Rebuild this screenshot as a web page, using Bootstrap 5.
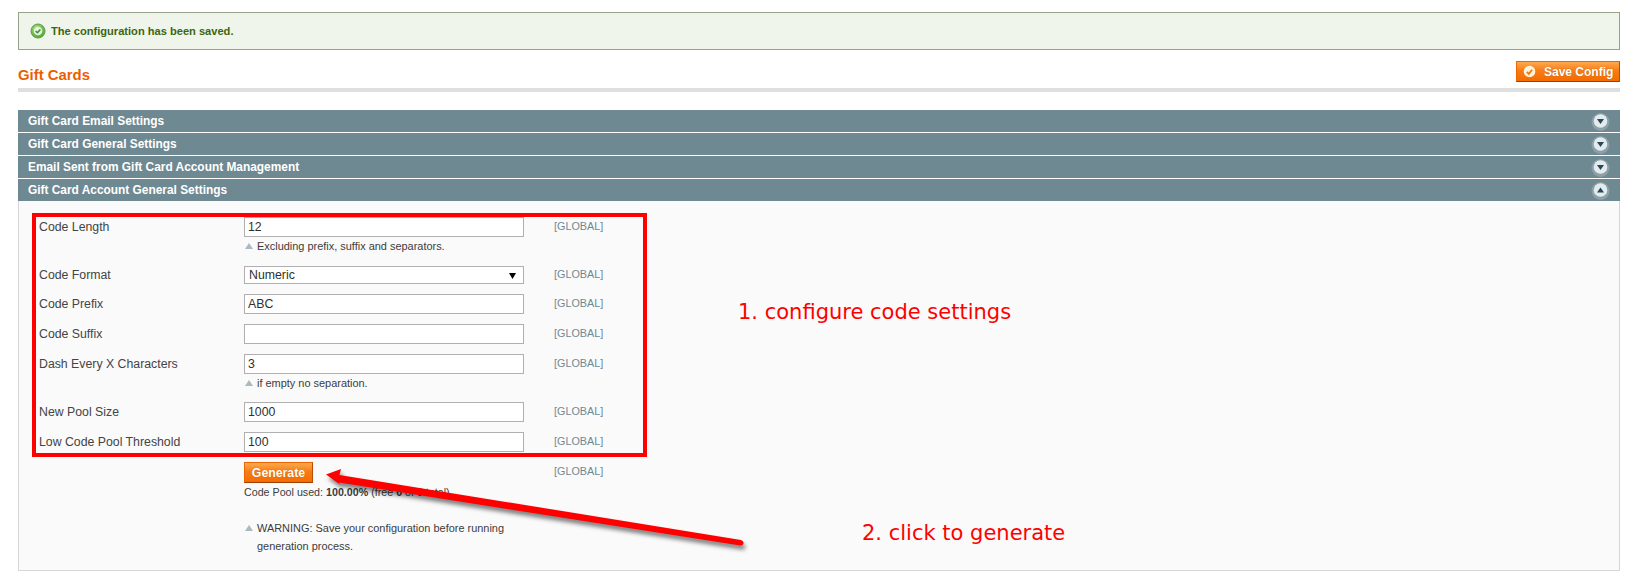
<!DOCTYPE html>
<html lang="en"><head><meta charset="utf-8"><title>Gift Cards</title>
<link href="https://cdn.jsdelivr.net/npm/bootstrap@5.3.0/dist/css/bootstrap.min.css" rel="stylesheet">
<style>
html,body{background:#fff}
body{margin:0;font-family:"Liberation Sans",Arial,sans-serif;font-size:12.3px;line-height:18px;color:#444}
.sheet{position:relative;width:1635px;height:586px;overflow:hidden;padding:12px 15px 0 18px}
.okmsg{height:38px;background:#eff5ea;border:1px solid #95a486;color:#3d6611;font-weight:700;font-size:11.1px;padding-left:11px;gap:5px}
.headbar{height:42px;border-bottom:4px solid #dfdfdf;margin-bottom:18px;padding-top:11px}
.pagetitle{color:#eb5e00;font-size:14.9px;font-weight:700;line-height:22px;margin:3px 0 0}
.orangebtn{display:inline-flex;align-items:center;background:linear-gradient(#ffa94f,#f77c16 45%,#f46c00);border:1px solid #ed6502;border-right-color:#b84f00;border-bottom-color:#a04000;border-radius:0;color:#fff;font-weight:700;font-size:12.3px;line-height:18px;padding:0;text-shadow:0 0 1px #b85a00}
.savebtn{width:104px;height:21px;padding-left:6px;gap:8px;font-size:12px}
.genbtn{width:69px;height:21px;justify-content:center}
.sechead{height:22px;margin-bottom:1px;background:#6f8992;color:#fff;font-weight:700;line-height:22px;padding:0 10px;font-size:11.9px}
.sechead.lastopen{margin-bottom:0}
.togglei{width:19px;height:19px;flex:none}
.secbody{height:370px;background:#fafafa;border:1px solid #d6d6d6;border-top:0;padding:16px 0 0 20px}
.cfgrow{margin-bottom:10px}
.cfgrow.selrow{margin-bottom:9px}
.cfglabel{width:205px;line-height:20px;flex:none}
.cfgval{width:280px;flex:none}
.cfgscope{margin-left:30px;color:#6f8992;font-size:10.8px;line-height:19px}
.cfginput{height:20px;border:1px solid #b0b0b0;border-radius:0;padding:0 3px;font-size:12.3px;line-height:18px;color:#2f2f2f;background:#fff;min-height:0;box-shadow:none}
.cfgselect{height:18px;margin-top:1px;border:1px solid #b0b0b0;border-radius:0;padding:0 4px;font-size:12.3px;line-height:16px;color:#2f2f2f;background-color:#fff;background-image:url("data:image/svg+xml,%3Csvg xmlns='http://www.w3.org/2000/svg' width='8' height='7'%3E%3Cpath d='M0 1h7L3.500 7z'/%3E%3C/svg%3E");background-repeat:no-repeat;background-position:right 6px center;background-size:8px 7px}
.cfgnote{font-size:10.95px;line-height:18px;padding-left:13px;position:relative;color:#3c3c3c}
.cfgnote::before{content:"";position:absolute;left:1px;top:6px;border-left:4px solid transparent;border-right:4px solid transparent;border-bottom:6px solid #a9bac0}
.poolline{font-size:10.7px;line-height:18px;color:#3c3c3c}
.warnbox{margin-top:18px}
.redbox{position:absolute;left:32px;top:213px;width:615px;height:244px;border:4px solid #f00}
.anno{position:absolute;color:#f00;font-family:"DejaVu Sans",Verdana,sans-serif;font-size:21px;line-height:24px;white-space:nowrap}
.anno1{left:738px;top:300px}
.anno2{left:862px;top:521px}
.arrowsvg{position:absolute;left:0;top:0;width:1635px;height:586px;pointer-events:none;filter:drop-shadow(2px 4px 2px rgba(0,0,0,.5))}
</style></head><body>
<div class="sheet">
  <div class="okmsg d-flex align-items-center">
    <svg width="16" height="16" viewBox="0 0 16 16"><defs><radialGradient id="gg" cx=".4" cy=".3" r=".8"><stop offset="0" stop-color="#a8de7e"/><stop offset="1" stop-color="#46a12a"/></radialGradient></defs><circle cx="8" cy="8" r="7" fill="url(#gg)" stroke="#5c9a48"/><circle cx="8" cy="8" r="4.300" fill="#eaf3e4" opacity=".95"/><path d="M5.700 8l1.700 1.700 3-3.200" fill="none" stroke="#3f8f2a" stroke-width="1.600"/></svg>
    <span>The configuration has been saved.</span>
  </div>
  <div class="headbar d-flex justify-content-between align-items-start">
    <h3 class="pagetitle">Gift Cards</h3>
    <button type="button" class="btn orangebtn savebtn">
      <svg width="13" height="13" viewBox="0 0 13 13"><circle cx="6.500" cy="6.500" r="5.800" fill="#fff2e0"/><path d="M3.800 6.800l2 2 3.300-4" fill="none" stroke="#f0780e" stroke-width="1.800"/></svg>
      <span>Save Config</span>
    </button>
  </div>
  <div class="sechead d-flex justify-content-between align-items-center"><span>Gift Card Email Settings</span><svg class="togglei" viewBox="0 0 19 19"><circle cx="9.500" cy="10" r="9" fill="#8ba0a8"/><circle cx="9.500" cy="9" r="6.800" fill="#e3ebed"/><path d="M6 7h7l-3.500 5z" fill="#22495c"/></svg></div>
  <div class="sechead d-flex justify-content-between align-items-center"><span>Gift Card General Settings</span><svg class="togglei" viewBox="0 0 19 19"><circle cx="9.500" cy="10" r="9" fill="#8ba0a8"/><circle cx="9.500" cy="9" r="6.800" fill="#e3ebed"/><path d="M6 7h7l-3.500 5z" fill="#22495c"/></svg></div>
  <div class="sechead d-flex justify-content-between align-items-center"><span>Email Sent from Gift Card Account Management</span><svg class="togglei" viewBox="0 0 19 19"><circle cx="9.500" cy="10" r="9" fill="#8ba0a8"/><circle cx="9.500" cy="9" r="6.800" fill="#e3ebed"/><path d="M6 7h7l-3.500 5z" fill="#22495c"/></svg></div>
  <div class="sechead lastopen d-flex justify-content-between align-items-center"><span>Gift Card Account General Settings</span><svg class="togglei" viewBox="0 0 19 19"><circle cx="9.500" cy="10" r="9" fill="#8ba0a8"/><circle cx="9.500" cy="9" r="6.800" fill="#e3ebed"/><path d="M6 11.500h7L9.500 6.500z" fill="#22495c"/></svg></div>
  <div class="secbody">
    <div class="cfgrow d-flex"><div class="cfglabel">Code Length</div><div class="cfgval"><input class="form-control cfginput" value="12"><div class="cfgnote">Excluding prefix, suffix and separators.</div></div><div class="cfgscope">[GLOBAL]</div></div>
    <div class="cfgrow selrow d-flex"><div class="cfglabel">Code Format</div><div class="cfgval"><select class="form-select cfgselect"><option>Numeric</option></select></div><div class="cfgscope">[GLOBAL]</div></div>
    <div class="cfgrow d-flex"><div class="cfglabel">Code Prefix</div><div class="cfgval"><input class="form-control cfginput" value="ABC"></div><div class="cfgscope">[GLOBAL]</div></div>
    <div class="cfgrow d-flex"><div class="cfglabel">Code Suffix</div><div class="cfgval"><input class="form-control cfginput" value=""></div><div class="cfgscope">[GLOBAL]</div></div>
    <div class="cfgrow d-flex"><div class="cfglabel">Dash Every X Characters</div><div class="cfgval"><input class="form-control cfginput" value="3"><div class="cfgnote">if empty no separation.</div></div><div class="cfgscope">[GLOBAL]</div></div>
    <div class="cfgrow d-flex"><div class="cfglabel">New Pool Size</div><div class="cfgval"><input class="form-control cfginput" value="1000"></div><div class="cfgscope">[GLOBAL]</div></div>
    <div class="cfgrow d-flex"><div class="cfglabel">Low Code Pool Threshold</div><div class="cfgval"><input class="form-control cfginput" value="100"></div><div class="cfgscope">[GLOBAL]</div></div>
    <div class="d-flex"><div class="cfglabel"></div><div class="cfgval"><button type="button" class="btn orangebtn genbtn">Generate</button><div class="poolline">Code Pool used: <strong>100.00%</strong> (free <strong>0</strong> of <strong>0</strong> total)</div><div class="cfgnote warnbox">WARNING: Save your configuration before running generation process.</div></div><div class="cfgscope">[GLOBAL]</div></div>
  </div>
  <div class="redbox"></div>
  <svg class="arrowsvg" viewBox="0 0 1635 586"><path d="M326 474.500L341 469L339.500 475L741 540Q744 541 743.500 543.500Q743 546 740 545.500L339 482.500L340 484.500z" fill="#f00"/></svg>
  <div class="anno anno1">1. configure code settings</div>
  <div class="anno anno2">2. click to generate</div>
</div>
<script src="https://cdn.jsdelivr.net/npm/bootstrap@5.3.0/dist/js/bootstrap.bundle.min.js"></script>
</body></html>
